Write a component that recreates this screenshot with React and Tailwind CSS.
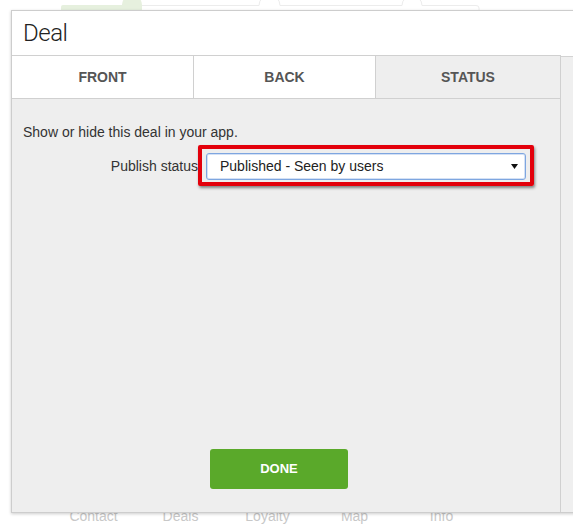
import { useState } from "react";

const tabs = [
  { label: "FRONT", width: "w-[181px]" },
  { label: "BACK", width: "w-[182px]" },
  { label: "STATUS", width: "flex-1" },
];
const navItems = ["Contact", "Deals", "Loyalty", "Map", "Info"];

function TopStrip() {
  // faint tab bar of the app behind the dialog
  return (
    <svg width="573" height="10" className="block">
      <path d="M61 10 V7 Q61 5 63 5 H122 A10 10 0 0 1 142 5 V10 Z" fill="#e6f0de" />
      <path d="M142 5.5 H259 A10 10 0 0 1 280 5.5 H402 A10 10 0 0 1 422 5.5 H476 Q479 5.5 479 8 V10" fill="none" stroke="#ececec" strokeWidth="1" />
    </svg>
  );
}

function PublishSelect() {
  return (
    <div className="relative ml-[8px]">
      <div className="flex items-center w-[320px] h-[27px] bg-white border border-[#7ea6e0] rounded-[3px] shadow-[inset_0_0_0_1px_#d4e1f5] pl-[13px] pr-[7px]">
        <span className="flex-1 text-[14px] text-[#222]">Published - Seen by users</span>
        <svg width="7" height="5" viewBox="0 0 7 5">
          <polygon points="0,0 7,0 3.5,5" fill="#111" />
        </svg>
      </div>
      <div className="absolute -left-[8px] -right-[8px] -top-[8px] -bottom-[6px] border-4 border-[#e3000b] rounded-[2px] shadow-[1px_2px_3px_rgba(0,0,0,0.45)] pointer-events-none" />
    </div>
  );
}

export default function App() {
  const [active, setActive] = useState(2);

  return (
    <div className="relative h-[530px] w-[573px] overflow-hidden bg-white flex flex-col justify-between font-['Liberation_Sans',Arial,sans-serif]">
      <TopStrip />

      <div className="flex pl-[50px] pb-[6px] text-[14px] leading-[16px] text-[#c8c8c8]">
        {navItems.map((item) => (
          <div key={item} className="w-[87px] text-center">
            {item}
          </div>
        ))}
      </div>

      {/* dialog */}
      <div className="absolute left-[11px] top-[10px] w-[620px] h-[503px] bg-white border border-[#cdcdcd] shadow-[0_1px_3px_rgba(0,0,0,0.2)] flex flex-col">
        <div className="h-[44px] flex items-center pl-[11px]">
          <h1 className="font-['Roboto',sans-serif] font-light text-[24px] text-[#222] tracking-[-0.5px]">Deal</h1>
        </div>

        <div className="flex flex-1">
          <div className="w-[549px] flex flex-col border-t border-r border-[#d0d0d0]">
            <div className="flex h-[43px] border-b border-[#d0d0d0]">
              {tabs.map((tab, i) => (
                <button
                  key={tab.label}
                  onClick={() => setActive(i)}
                  className={`${tab.width} text-[14px] font-bold text-[#555] ${i > 0 ? "border-l border-[#d0d0d0]" : ""} ${
                    active === i ? "bg-[#eeeeee]" : "bg-white"
                  }`}
                >
                  {tab.label}
                </button>
              ))}
            </div>

            <div className="flex-1 bg-[#eeeeee] flex flex-col pl-[11px] pt-[23px] pb-[23px]">
              <p className="text-[14px] leading-[20px] text-[#333]">Show or hide this deal in your app.</p>

              <div className="flex items-center mt-[11px]">
                <label className="w-[175px] text-right text-[14px] text-[#333]">Publish status</label>
                <PublishSelect />
              </div>

              <div className="flex-1" />

              <button className="ml-[187px] w-[138px] h-[40px] rounded-[3px] bg-[#5aa92a] text-white text-[13px] font-bold">
                DONE
              </button>
            </div>
          </div>

          <div className="flex-1 mt-[1px] bg-[#efefef] border-t border-[#d3d3d3]" />
        </div>
      </div>
    </div>
  );
}
